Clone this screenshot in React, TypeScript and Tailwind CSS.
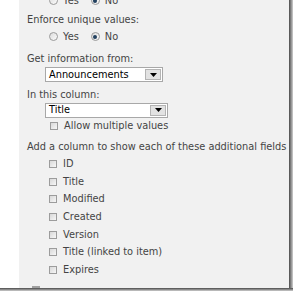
import React from 'react';

const font = { fontFamily: '"DejaVu Sans", Verdana, sans-serif' };

const Radio: React.FC<{ checked?: boolean }> = ({ checked }) => (
  <span className="w-[9px] h-[9px] rounded-full border border-[#9a9a9a] bg-gradient-to-br from-[#dcdcdc] to-[#fbfbfb] flex items-center justify-center shrink-0">
    {checked && <span className="w-[4px] h-[4px] rounded-full bg-[#22405f]" />}
  </span>
);

const Check: React.FC = () => (
  <span className="w-[8px] h-[8px] border border-[#9c9c9c] bg-gradient-to-br from-[#d8d8d8] to-[#f7f7f7] shrink-0" />
);

const RadioRow: React.FC<{ className?: string }> = ({ className }) => (
  <div className={`h-[17px] flex items-center pl-[22px] text-[#444] ${className ?? ''}`}>
    <Radio />
    <span className="ml-[5px]">Yes</span>
    <span className="ml-[12px]"><Radio checked /></span>
    <span className="ml-[5px]">No</span>
  </div>
);

const Select: React.FC<{ value: string; width: string; className?: string }> = ({ value, width, className }) => (
  <div className={`ml-[18px] h-[15px] flex border border-[#a8a8a8] bg-white ${width} ${className ?? ''}`}>
    <div className="flex-1 flex items-center pl-[3px] text-black">{value}</div>
    <div className="w-[16px] my-[1px] mr-[1px] border border-[#b4b4b4] bg-[#e2e2e2] flex items-center justify-center">
      <svg width="7" height="4" viewBox="0 0 7 4"><path d="M0 0h7L3.5 4z" fill="#000" /></svg>
    </div>
  </div>
);

const fields = ['ID', 'Title', 'Modified', 'Created', 'Version', 'Title (linked to item)', 'Expires'];

export default function App() {
  return (
    <div className="w-[293px] h-[292px] bg-white overflow-hidden text-[9.8px] leading-none" style={font}>
      <div className="flex h-[288px]">
        <div className="w-[19px] bg-white" />
        <div className="w-[270px] bg-[#f1f1f1] overflow-hidden">
          <div className="pl-[8px]">
            <RadioRow className="-mt-[8px]" />
            <div className="mt-[4px] h-[14px] flex items-center text-[#444]">Enforce unique values:</div>
            <RadioRow className="mt-[1px]" />
            <div className="mt-[6.5px] h-[14px] flex items-center text-[#444]">Get information from:</div>
            <Select value="Announcements" width="w-[118px]" className="mt-[1.5px]" />
            <div className="mt-[5.5px] h-[14px] flex items-center text-[#444]">In this column:</div>
            <Select value="Title" width="w-[123px]" className="mt-[1px]" />
            <div className="mt-[1.5px] h-[14px] flex items-center pl-[23px] text-[#444]">
              <Check />
              <span className="ml-[6px]">Allow multiple values</span>
            </div>
            <div className="mt-[7px] h-[14px] flex items-center text-[#444] whitespace-nowrap">Add a column to show each of these additional fields</div>
            <div className="mt-[1.2px]">
              {fields.map((f, i) => (
                <div key={i} className="h-[17.67px] flex items-center pl-[22px] text-[#444]">
                  <Check />
                  <span className="ml-[6px]">{f}</span>
                </div>
              ))}
            </div>
            <div className="mt-[7px] ml-[5px] w-[8px] h-[8px] bg-[#a0a0a0]" />
          </div>
        </div>
        <div className="w-[4px] bg-gradient-to-r from-[#4a4a4a] via-[#8a8a8a] to-[#d0d0d0]" />
      </div>
      <div className="h-[3px] bg-gradient-to-b from-[#4a4a4a] via-[#8a8a8a] to-[#d0d0d0]" />
    </div>
  );
}
